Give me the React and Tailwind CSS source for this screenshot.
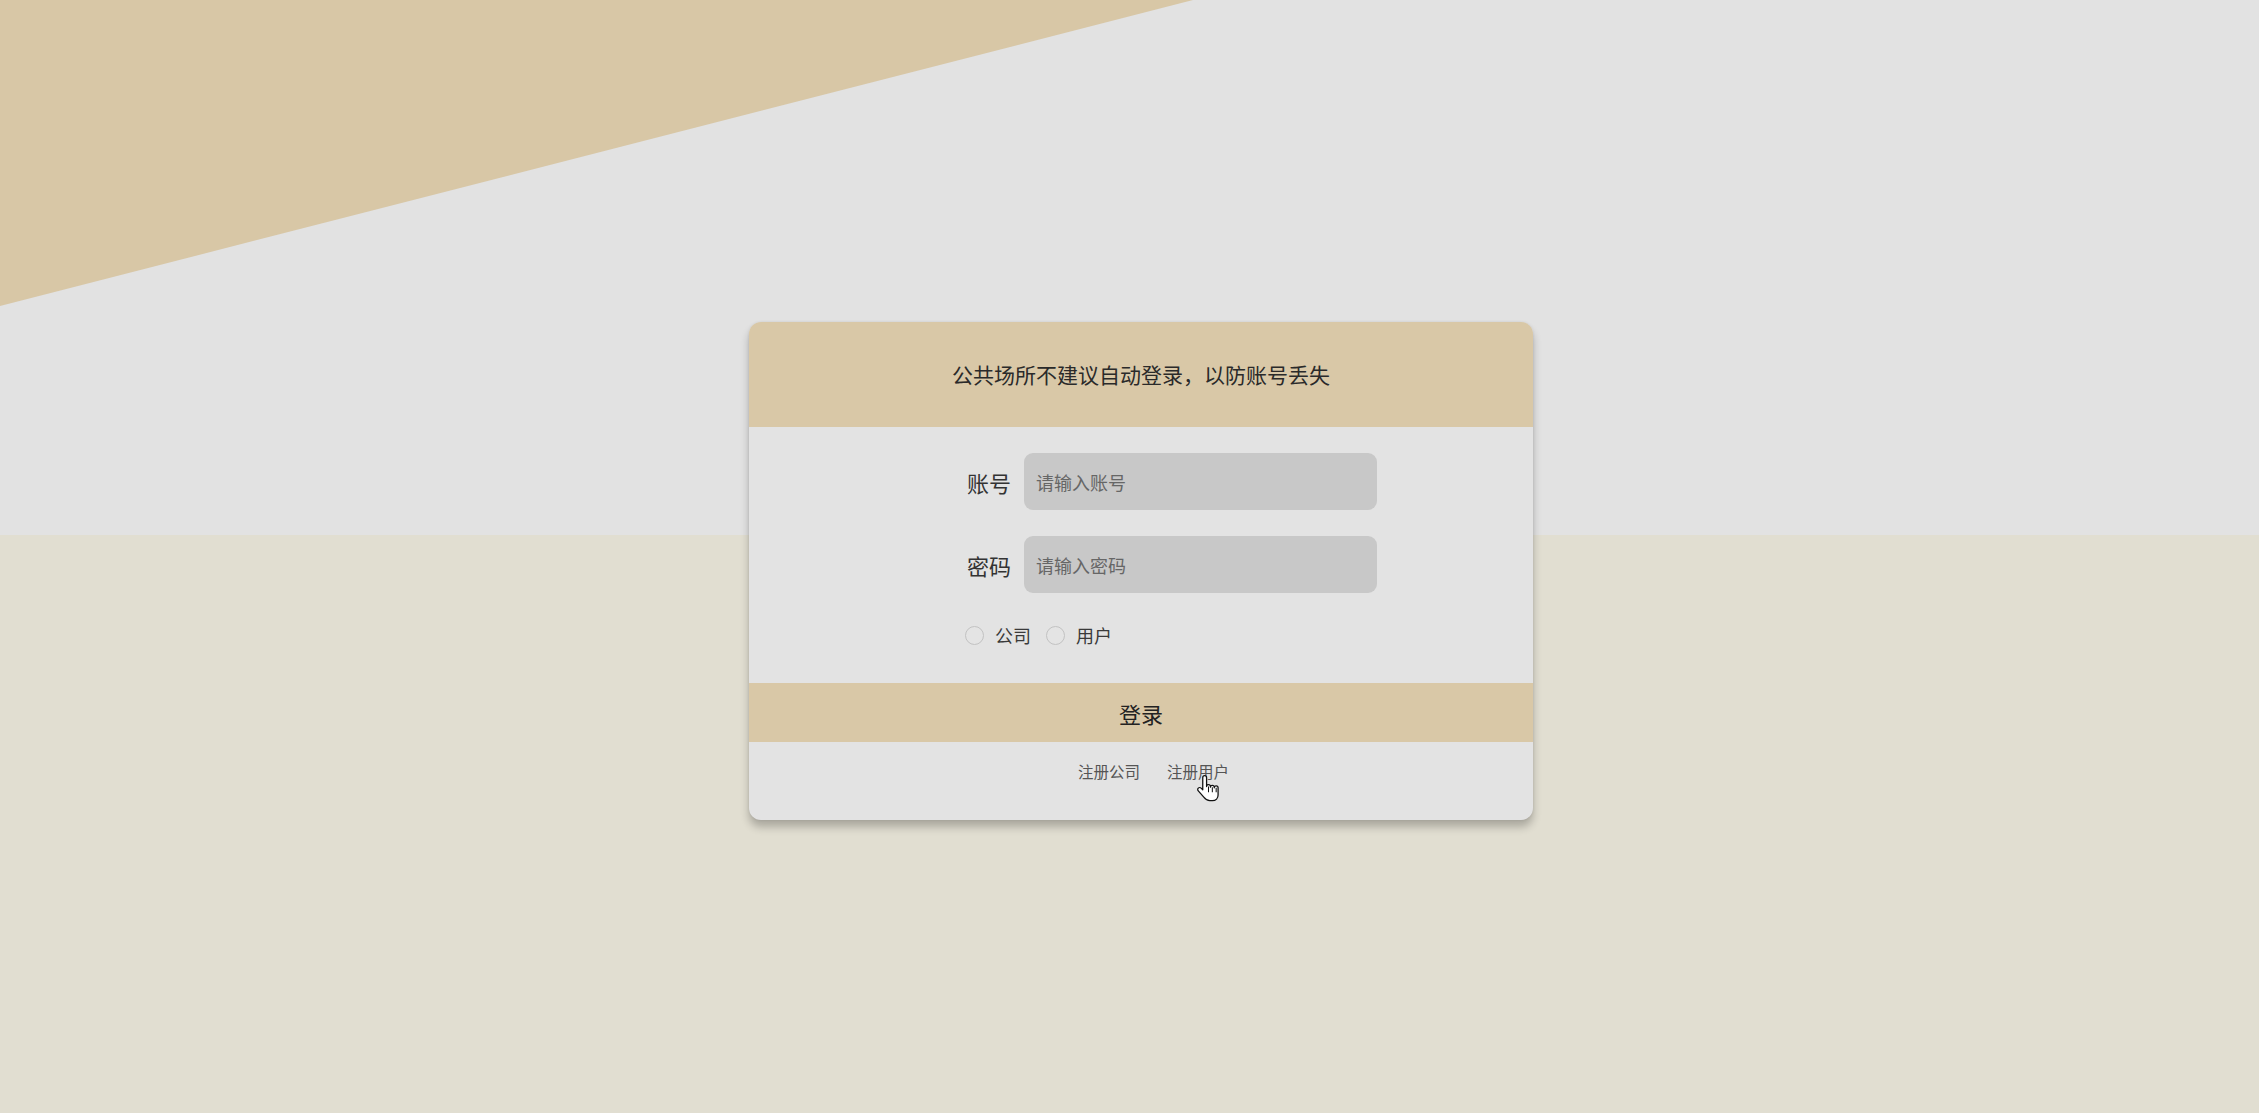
import React from "react";

const font = { fontFamily: '"Noto Sans CJK SC", "Noto Sans", sans-serif' };

function Radio({ label }) {
  return (
    <div className="flex items-center">
      <span className="w-[19px] h-[19px] rounded-full border-[1.5px] border-[#c2c2c2] bg-[#e4e4e4]" />
      <span className="ml-[11px] text-[18px] leading-none text-[#3a3a3a]">{label}</span>
    </div>
  );
}

function Field({ label, placeholder, type }) {
  return (
    <div className="flex items-center h-[57px]">
      <span className="w-[44px] mr-[13px] text-[22px] leading-none text-[#333]">{label}</span>
      <input
        type={type}
        placeholder={placeholder}
        className="w-[353px] h-[57px] rounded-[9px] bg-[#c8c8c8] pl-[12px] text-[18px] text-[#333] placeholder:text-[#666] outline-none"
        style={font}
      />
    </div>
  );
}

export default function App() {
  return (
    <div className="relative w-screen h-screen overflow-hidden" style={font}>
      {/* background */}
      <div className="absolute inset-0 flex flex-col">
        <div className="h-[535px] bg-[#e2e2e2]" />
        <div className="flex-1 bg-[#e1ded1]" />
        <svg className="absolute inset-0 w-full h-full" viewBox="0 0 2259 1113" preserveAspectRatio="none">
          <polygon points="0,0 1193,0 0,306" fill="#d8c7a6" />
        </svg>
      </div>

      {/* content */}
      <div className="relative pt-[322px] pl-[749px]">
        <div className="w-[784px] rounded-[12px] bg-[#e3e3e3] shadow-[0_7px_8px_rgba(0,0,0,0.24),0_0_3px_rgba(0,0,0,0.08)]">
          <div className="h-[105px] rounded-t-[12px] bg-[#d9c8a7] flex items-center justify-center">
            <span className="text-[21px] leading-none text-[#2a2a2a]">公共场所不建议自动登录，以防账号丢失</span>
          </div>
          <div className="h-[256px] pt-[26px] pl-[218px]">
            <Field label="账号" placeholder="请输入账号" type="text" />
            <div className="mt-[26px]">
              <Field label="密码" placeholder="请输入密码" type="password" />
            </div>
            <div className="mt-[32px] -ml-[2px] h-[20px] flex items-center gap-[15px]">
              <Radio label="公司" />
              <Radio label="用户" />
            </div>
          </div>
          <div className="h-[59px] bg-[#d9c8a7] flex items-center justify-center">
            <span className="text-[22px] leading-none text-[#222]">登录</span>
          </div>
          <div className="h-[78px]">
            <div className="h-[60px] flex items-center pl-[329px] gap-[27px] text-[15.5px] leading-none text-[#555]">
              <span>注册公司</span>
              <span>注册用户</span>
            </div>
          </div>
        </div>
      </div>

      {/* mouse cursor */}
      <svg className="absolute left-[1197px] top-[774px] w-[23px] h-[29px]" viewBox="0 0 18 22">
        <path
          d="M6 1c-.8 0-1.5.7-1.5 1.5V12L3.2 10.7c-.6-.6-1.6-.6-2.2 0-.6.6-.6 1.5 0 2.1L5.5 18c1 1.3 2.5 2.5 4.5 2.5h2c2.800 0 4.5-2 4.5-4.5V10.5c0-.8-.7-1.5-1.5-1.5s-1.5.7-1.5 1.5V10c0-.8-.7-1.5-1.5-1.5s-1.5.7-1.5 1.5v-.5C10.5 8.7 9.8 8 9 8s-1.5.7-1.5 1.5V2.5C7.5 1.7 6.8 1 6 1z"
          fill="#fff"
          stroke="#111"
          strokeWidth="1"
          strokeLinejoin="round"
        />
        <path d="M9 9.5V14M12 10v4M15 10.5V14" stroke="#111" strokeWidth="0.8" fill="none" />
      </svg>
    </div>
  );
}
